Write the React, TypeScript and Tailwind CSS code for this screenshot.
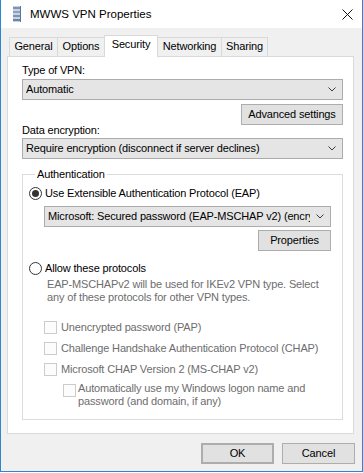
import type { ReactNode } from "react";

const font = { fontFamily: '"Liberation Sans", Arial, sans-serif' };

function Chevron() {
  return (
    <svg width="8" height="5" viewBox="0 0 8 5" className="shrink-0">
      <polyline points="0.5,0.5 4,4 7.5,0.5" fill="none" stroke="#3c3c3c" strokeWidth="1" />
    </svg>
  );
}

function Select({ children, className = "" }: { children: ReactNode; className?: string }) {
  return (
    <div
      className={`h-[21px] min-w-0 flex items-center justify-between bg-[#e5e5e5] border border-[#acacac] pl-[3px] pr-[6px] ${className}`}
    >
      <div className="flex-1 min-w-0 overflow-hidden whitespace-nowrap leading-[15px] mr-[6px]">{children}</div>
      <Chevron />
    </div>
  );
}

function Button({ children, className = "" }: { children: ReactNode; className?: string }) {
  return (
    <div
      className={`h-[21px] flex items-center justify-center bg-[#e1e1e1] border border-[#adadad] leading-[15px] ${className}`}
    >
      {children}
    </div>
  );
}

function Radio({ checked, label }: { checked?: boolean; label: string }) {
  return (
    <div className="h-[15px] flex items-center">
      <div className="w-[13px] h-[13px] rounded-full border border-[#333333] bg-white flex items-center justify-center">
        {checked && <div className="w-[7px] h-[7px] rounded-full bg-[#333333]" />}
      </div>
      <span className="ml-[3px] leading-[15px]">{label}</span>
    </div>
  );
}

function Check({ label }: { label: string }) {
  return (
    <div className="h-[15px] flex items-center">
      <div className="w-[13px] h-[13px] border border-[#cccccc] bg-[#fcfcfc]" />
      <span className="ml-[4px] leading-[15px] text-[#6d6d6d]">{label}</span>
    </div>
  );
}

function Tab({ label, className = "" }: { label: string; className?: string }) {
  return (
    <div
      className={`h-[19px] flex justify-center pt-[1px] border-t border-[#d9d9d9] bg-[#f0f0f0] leading-[15px] ${className}`}
    >
      {label}
    </div>
  );
}

export default function App() {
  return (
    <div className="w-[363px] h-[473px] bg-white text-[11px] tracking-[-0.15px] text-black" style={font}>
      <div className="w-[363px] h-[472px] flex flex-col border-x border-b border-[#2b87d3] bg-[#f0f0f0]">
        {/* title bar */}
        <div className="h-[28px] shrink-0 bg-white flex items-center">
          <svg width="8" height="16" viewBox="0 0 8 16" className="ml-[12px]">
            <rect x="0" y="0" width="8" height="16" fill="#c8d3e2" />
            <rect x="0" y="1" width="8" height="2" fill="#7b93b8" />
            <rect x="0" y="5" width="8" height="2" fill="#8ea3c4" />
            <rect x="0" y="9" width="8" height="2" fill="#7b93b8" />
            <rect x="0" y="13" width="8" height="2" fill="#6a84ad" />
            <rect x="7" y="0" width="1" height="16" fill="#5d7499" />
          </svg>
          <span className="ml-[9px] text-[11.5px] tracking-normal leading-[15px]">MWWS VPN Properties</span>
          <svg width="11" height="11" viewBox="0 0 11 11" className="ml-auto mr-[9px]">
            <path d="M0.5 0.5 L10.5 10.5 M10.5 0.5 L0.5 10.5" stroke="#111" strokeWidth="1" />
          </svg>
        </div>

        {/* body */}
        <div className="flex-1 flex flex-col px-[6px]">
          {/* tabs */}
          <div className="mt-[7px] h-[21px] flex items-end pl-[2px]">
            <Tab label="General" className="w-[48px] border-l" />
            <Tab label="Options" className="w-[47px] border-l" />
            <div className="relative z-10 -mb-px h-[22px] w-[54px] flex justify-center pt-[1px] bg-white border-x border-t border-[#d9d9d9] leading-[15px]">
              Security
            </div>
            <Tab label="Networking" className="w-[63px]" />
            <Tab label="Sharing" className="w-[47px] border-x" />
          </div>

          {/* panel */}
          <div className="w-[347px] h-[378px] bg-white border border-[#d9d9d9] pl-[14px] pr-[10px] pt-[6px] flex flex-col">
            <div className="leading-[15px]">Type of VPN:</div>
            <Select className="mt-[1px]">Automatic</Select>
            <Button className="mt-[4px] self-end w-[102px]">Advanced settings</Button>
            <div className="-mt-[2px] leading-[15px]">Data encryption:</div>
            <Select>Require encryption (disconnect if server declines)</Select>

            <fieldset className="mt-[8px] min-w-0 w-full border border-[#dcdcdc] pl-[6px] pr-[11px] pb-[11px] flex flex-col">
              <legend className="ml-[6px] px-[2px] leading-[15px]">Authentication</legend>
              <div className="mt-[4px]">
                <Radio checked label="Use Extensible Authentication Protocol (EAP)" />
              </div>
              <Select className="mt-[5px] ml-[15px]">Microsoft: Secured password (EAP-MSCHAP v2) (encryption enabled)</Select>
              <Button className="mt-[3px] self-end w-[73px]">Properties</Button>
              <div className="mt-[10px]">
                <Radio label="Allow these protocols" />
              </div>
              <div className="mt-[2px] ml-[18px] leading-[13px] text-[#6d6d6d]">
                EAP-MSCHAPv2 will be used for IKEv2 VPN type. Select
                <br />
                any of these protocols for other VPN types.
              </div>
              <div className="mt-[16px] ml-[15px] flex flex-col gap-[6px]">
                <Check label="Unencrypted password (PAP)" />
                <Check label="Challenge Handshake Authentication Protocol (CHAP)" />
                <Check label="Microsoft CHAP Version 2 (MS-CHAP v2)" />
              </div>
              <div className="mt-[5px] ml-[34px] flex items-start">
                <div className="mt-[2px] w-[13px] h-[13px] shrink-0 border border-[#cccccc] bg-[#fcfcfc]" />
                <div className="ml-[2px] leading-[13px] text-[#6d6d6d]">
                  Automatically use my Windows logon name and
                  <br />
                  password (and domain, if any)
                </div>
              </div>
            </fieldset>
          </div>

          {/* dialog buttons */}
          <div className="mt-[9px] flex justify-end gap-[8px] pr-[1px]">
            <Button className="w-[73px] border-2 border-[#0078d7]">OK</Button>
            <Button className="w-[73px]">Cancel</Button>
          </div>
        </div>
      </div>
    </div>
  );
}
